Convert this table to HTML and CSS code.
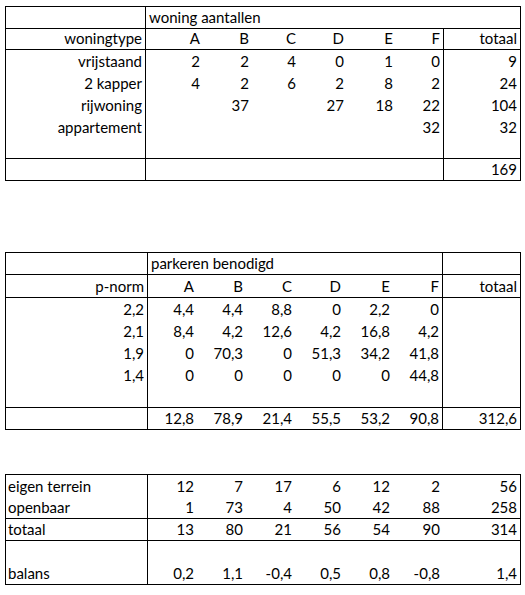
FILE: index.html
```html
<!DOCTYPE html>
<html lang="nl">

<head>
     <meta charset="UTF-8" />
     <title>Parkeerbalans</title>
     <meta name="viewport" content="width=device-width, initial-scale=1" />
     <link rel="stylesheet" href="styles.css">
</head>

<body>
     <!-- woning aantallen -->
     <div class="sheet sheet-woning">
          <div class="row h22 rule">
               <div class="cell line"></div>
               <div class="cell title span-woning line">woning aantallen</div>
          </div>
          <div class="row h21 rule">
               <div class="cell num line">woningtype</div>
               <div class="cell num">A</div>
               <div class="cell num">B</div>
               <div class="cell num">C</div>
               <div class="cell num">D</div>
               <div class="cell num">E</div>
               <div class="cell num line">F</div>
               <div class="cell num line">totaal</div>
          </div>
          <div class="row h22">
               <div class="cell num line">vrijstaand</div>
               <div class="cell num">2</div>
               <div class="cell num">2</div>
               <div class="cell num">4</div>
               <div class="cell num">0</div>
               <div class="cell num">1</div>
               <div class="cell num line">0</div>
               <div class="cell num line">9</div>
          </div>
          <div class="row h22">
               <div class="cell num line">2 kapper</div>
               <div class="cell num">4</div>
               <div class="cell num">2</div>
               <div class="cell num">6</div>
               <div class="cell num">2</div>
               <div class="cell num">8</div>
               <div class="cell num line">2</div>
               <div class="cell num line">24</div>
          </div>
          <div class="row h22">
               <div class="cell num line">rijwoning</div>
               <div class="cell num"></div>
               <div class="cell num">37</div>
               <div class="cell num"></div>
               <div class="cell num">27</div>
               <div class="cell num">18</div>
               <div class="cell num line">22</div>
               <div class="cell num line">104</div>
          </div>
          <div class="row h22">
               <div class="cell num line">appartement</div>
               <div class="cell num"></div>
               <div class="cell num"></div>
               <div class="cell num"></div>
               <div class="cell num"></div>
               <div class="cell num"></div>
               <div class="cell num line">32</div>
               <div class="cell num line">32</div>
          </div>
          <div class="row h21 rule">
               <div class="cell line"></div>
               <div class="cell"></div>
               <div class="cell"></div>
               <div class="cell"></div>
               <div class="cell"></div>
               <div class="cell"></div>
               <div class="cell line"></div>
               <div class="cell line"></div>
          </div>
          <div class="row h22 rule">
               <div class="cell line"></div>
               <div class="cell span-ab"></div>
               <div class="cell"></div>
               <div class="cell"></div>
               <div class="cell"></div>
               <div class="cell line"></div>
               <div class="cell num line">169</div>
          </div>
     </div>

     <!-- parkeren benodigd -->
     <div class="sheet sheet-parkeren">
          <div class="row h22 rule">
               <div class="cell line"></div>
               <div class="cell title span-parkeren line">parkeren benodigd</div>
               <div class="cell line"></div>
          </div>
          <div class="row h23 rule">
               <div class="cell num line">p-norm</div>
               <div class="cell num">A</div>
               <div class="cell num">B</div>
               <div class="cell num">C</div>
               <div class="cell num">D</div>
               <div class="cell num">E</div>
               <div class="cell num line">F</div>
               <div class="cell num line">totaal</div>
          </div>
          <div class="row h22">
               <div class="cell num line">2,2</div>
               <div class="cell num">4,4</div>
               <div class="cell num">4,4</div>
               <div class="cell num">8,8</div>
               <div class="cell num">0</div>
               <div class="cell num">2,2</div>
               <div class="cell num line">0</div>
               <div class="cell line"></div>
          </div>
          <div class="row h22">
               <div class="cell num line">2,1</div>
               <div class="cell num">8,4</div>
               <div class="cell num">4,2</div>
               <div class="cell num">12,6</div>
               <div class="cell num">4,2</div>
               <div class="cell num">16,8</div>
               <div class="cell num line">4,2</div>
               <div class="cell line"></div>
          </div>
          <div class="row h22">
               <div class="cell num line">1,9</div>
               <div class="cell num">0</div>
               <div class="cell num">70,3</div>
               <div class="cell num">0</div>
               <div class="cell num">51,3</div>
               <div class="cell num">34,2</div>
               <div class="cell num line">41,8</div>
               <div class="cell line"></div>
          </div>
          <div class="row h22">
               <div class="cell num line">1,4</div>
               <div class="cell num">0</div>
               <div class="cell num">0</div>
               <div class="cell num">0</div>
               <div class="cell num">0</div>
               <div class="cell num">0</div>
               <div class="cell num line">44,8</div>
               <div class="cell line"></div>
          </div>
          <div class="row h22 rule">
               <div class="cell line"></div>
               <div class="cell"></div>
               <div class="cell"></div>
               <div class="cell"></div>
               <div class="cell"></div>
               <div class="cell"></div>
               <div class="cell line"></div>
               <div class="cell line"></div>
          </div>
          <div class="row h22 rule">
               <div class="cell line"></div>
               <div class="cell num">12,8</div>
               <div class="cell num">78,9</div>
               <div class="cell num">21,4</div>
               <div class="cell num">55,5</div>
               <div class="cell num">53,2</div>
               <div class="cell num line">90,8</div>
               <div class="cell num line">312,6</div>
          </div>
     </div>

     <!-- balans -->
     <div class="sheet sheet-balans">
          <div class="row h22">
               <div class="cell label line">eigen terrein</div>
               <div class="cell num">12</div>
               <div class="cell num">7</div>
               <div class="cell num">17</div>
               <div class="cell num">6</div>
               <div class="cell num">12</div>
               <div class="cell num">2</div>
               <div class="cell num line">56</div>
          </div>
          <div class="row h22 rule">
               <div class="cell label line">openbaar</div>
               <div class="cell num">1</div>
               <div class="cell num">73</div>
               <div class="cell num">4</div>
               <div class="cell num">50</div>
               <div class="cell num">42</div>
               <div class="cell num">88</div>
               <div class="cell num line">258</div>
          </div>
          <div class="row h22 rule">
               <div class="cell label line">totaal</div>
               <div class="cell num">13</div>
               <div class="cell num">80</div>
               <div class="cell num">21</div>
               <div class="cell num">56</div>
               <div class="cell num">54</div>
               <div class="cell num">90</div>
               <div class="cell num line">314</div>
          </div>
          <div class="row h22">
               <div class="cell line"></div>
               <div class="cell"></div>
               <div class="cell"></div>
               <div class="cell"></div>
               <div class="cell"></div>
               <div class="cell"></div>
               <div class="cell"></div>
               <div class="cell line"></div>
          </div>
          <div class="row h22 rule">
               <div class="cell label line">balans</div>
               <div class="cell num">0,2</div>
               <div class="cell num">1,1</div>
               <div class="cell num">-0,4</div>
               <div class="cell num">0,5</div>
               <div class="cell num">0,8</div>
               <div class="cell num">-0,8</div>
               <div class="cell num line">1,4</div>
          </div>
     </div>
</body>

</html>
```

FILE: styles.css
```css
* {
     box-sizing: border-box;
     margin: 0;
     padding: 0;
}

body {
     font-family: Lato, "Liberation Sans", sans-serif;
     font-size: 15px;
     color: #000;
     background: #fff;
}

.sheet {
     width: 516px;
     margin-left: 5px;
     border-left: 1px solid #000;
     border-top: 1px solid #000;
}

.sheet-woning {
     margin-top: 6px;
}

.sheet-parkeren {
     margin-top: 71px;
}

.sheet-balans {
     margin-top: 44px;
}

.row {
     display: grid;
}

.sheet-woning .row {
     grid-template-columns: 140px 57px 49px 47px 48px 49px 48px 77px;
}

.sheet-parkeren .row,
.sheet-balans .row {
     grid-template-columns: 142px 49px 49px 49px 49px 49px 50px 78px;
}

.h21 {
     height: 21px;
}

.h22 {
     height: 22px;
}

.h23 {
     height: 23px;
}

.rule {
     border-bottom: 1px solid #000;
}

.cell {
     display: flex;
     align-items: flex-end;
     padding: 0 3px 2px 3px;
     line-height: 18px;
     white-space: nowrap;
}

.line {
     border-right: 1px solid #000;
}

.num {
     justify-content: flex-end;
}

.label {
     padding-left: 2px;
}

.title {
     padding-left: 3px;
}

.span-woning {
     grid-column: 2 / 9;
}

.span-parkeren {
     grid-column: 2 / 8;
}

.span-ab {
     grid-column: 2 / 4;
}
```
